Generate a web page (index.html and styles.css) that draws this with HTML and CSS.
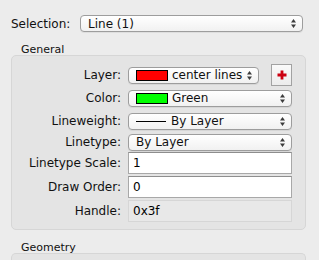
FILE: index.html
```html
<!DOCTYPE html>
<html>
<head>
    <title>Properties</title>
    <link rel="stylesheet" href="styles.css">
</head>
<body>
    <div class="selection-row">
        <span class="selection-label">Selection:</span>
        <div class="popup popup-wide">
            <span class="popup-text">Line (1)</span>
            <svg class="arrows" width="5" height="9" viewBox="0 0 5 9"><path d="M2.5 0L5 3.5H0z M2.5 9L5 5.5H0z" fill="#3c3c3c"/></svg>
        </div>
    </div>

    <div class="section-title">General</div>
    <div class="group">
        <div class="row row-layer">
            <label class="prop-label">Layer:</label>
            <div class="popup popup-layer">
                <span class="swatch swatch-red"></span>
                <span class="popup-text">center lines</span>
                <svg class="arrows" width="5" height="9" viewBox="0 0 5 9"><path d="M2.5 0L5 3.5H0z M2.5 9L5 5.5H0z" fill="#3c3c3c"/></svg>
            </div>
            <button class="add-btn">
                <svg width="10" height="10" viewBox="0 0 10 10"><path d="M3.6 0.5h2.8v3.1h3.1v2.8h-3.1v3.1h-2.8v-3.1h-3.1v-2.8h3.1z" fill="#cc0011"/></svg>
            </button>
        </div>
        <div class="row row-color">
            <label class="prop-label">Color:</label>
            <div class="popup">
                <span class="swatch swatch-green"></span>
                <span class="popup-text">Green</span>
                <svg class="arrows" width="5" height="9" viewBox="0 0 5 9"><path d="M2.5 0L5 3.5H0z M2.5 9L5 5.5H0z" fill="#3c3c3c"/></svg>
            </div>
        </div>
        <div class="row row-weight">
            <label class="prop-label">Lineweight:</label>
            <div class="popup">
                <span class="line-sample"></span>
                <span class="popup-text">By Layer</span>
                <svg class="arrows" width="5" height="9" viewBox="0 0 5 9"><path d="M2.5 0L5 3.5H0z M2.5 9L5 5.5H0z" fill="#3c3c3c"/></svg>
            </div>
        </div>
        <div class="row row-type">
            <label class="prop-label">Linetype:</label>
            <div class="popup">
                <span class="popup-text">By Layer</span>
                <svg class="arrows" width="5" height="9" viewBox="0 0 5 9"><path d="M2.5 0L5 3.5H0z M2.5 9L5 5.5H0z" fill="#3c3c3c"/></svg>
            </div>
        </div>
        <div class="row row-scale">
            <label class="prop-label">Linetype Scale:</label>
            <input class="field" type="text" value="1">
        </div>
        <div class="row row-order">
            <label class="prop-label">Draw Order:</label>
            <input class="field" type="text" value="0">
        </div>
        <div class="row row-handle">
            <label class="prop-label">Handle:</label>
            <input class="field field-readonly" type="text" value="0x3f" readonly>
        </div>
    </div>

    <div class="section-title section-geometry">Geometry</div>
    <div class="group group-geometry"></div>
</body>
</html>
```

FILE: styles.css
```css
html, body {
    height: 260px;
    overflow: hidden;
}

body {
    margin: 0;
    background-color: #ececec;
    font-family: "DejaVu Sans", "Liberation Sans", sans-serif;
    font-size: 12px;
    color: #111;
}

.selection-row {
    display: flex;
    align-items: center;
    padding: 15px 16px 0 11px;
    height: 17px;
}

.selection-label {
    width: 69px;
}

.popup {
    display: flex;
    align-items: center;
    flex: 1;
    height: 17px;
    box-sizing: border-box;
    border: 1px solid #9d9d9d;
    border-radius: 4px;
    background: linear-gradient(#ffffff, #f1f1f1);
    padding: 0 6px 0 7px;
    box-shadow: 0 1px 0 rgba(0, 0, 0, 0.06);
}

.popup-text {
    flex: 1;
    white-space: nowrap;
    overflow: hidden;
}

.arrows {
    flex-shrink: 0;
    margin-left: 3px;
}

.section-title {
    font-size: 11px;
    padding: 12px 0 0 21px;
    height: 11px;
    line-height: 11px;
}

.group {
    margin: 0 13px 0 11px;
    background-color: #e4e4e4;
    border: 1px solid #d6d6d6;
    border-radius: 5px;
    padding: 8px 13px 7px 0;
    height: 158px;
}

.row {
    display: flex;
    align-items: center;
    height: 22px;
}

.prop-label {
    width: 109px;
    text-align: right;
    padding-right: 7px;
    flex-shrink: 0;
}

.row-color { height: 24px; }
.row-weight { height: 22px; }
.row-type { height: 20px; }
.row-order, .row-handle { margin-top: 2px; }

.popup-layer {
    flex: none;
    width: 131px;
    margin-right: 12px;
}

.add-btn {
    width: 22px;
    height: 22px;
    padding: 0;
    border: 1px solid #a2a2a2;
    background: linear-gradient(#fafafa, #ececec);
    display: flex;
    align-items: center;
    justify-content: center;
}

.swatch {
    width: 30px;
    height: 9px;
    border: 1px solid #000;
    margin-right: 4px;
    flex-shrink: 0;
}

.swatch-red { background-color: #ff0000; }
.swatch-green { background-color: #00ff00; }

.line-sample {
    width: 30px;
    height: 1px;
    background-color: #000;
    margin-right: 5px;
    flex-shrink: 0;
}

.field {
    flex: 1;
    height: 22px;
    box-sizing: border-box;
    border: 1px solid #a8a8a8;
    border-top-color: #8e8e8e;
    background-color: #fff;
    font-family: "DejaVu Sans", "Liberation Sans", sans-serif;
    font-size: 12px;
    color: #000;
    padding: 0 4px;
    margin: 0;
    outline: none;
}

.field-readonly {
    background-color: #e8e8e8;
    border-color: #d6d6d6;
}

.section-geometry {
    padding-top: 12px;
}

.group-geometry {
    height: 6px;
    padding: 0;
    border-bottom: none;
    border-radius: 5px 5px 0 0;
}
```
